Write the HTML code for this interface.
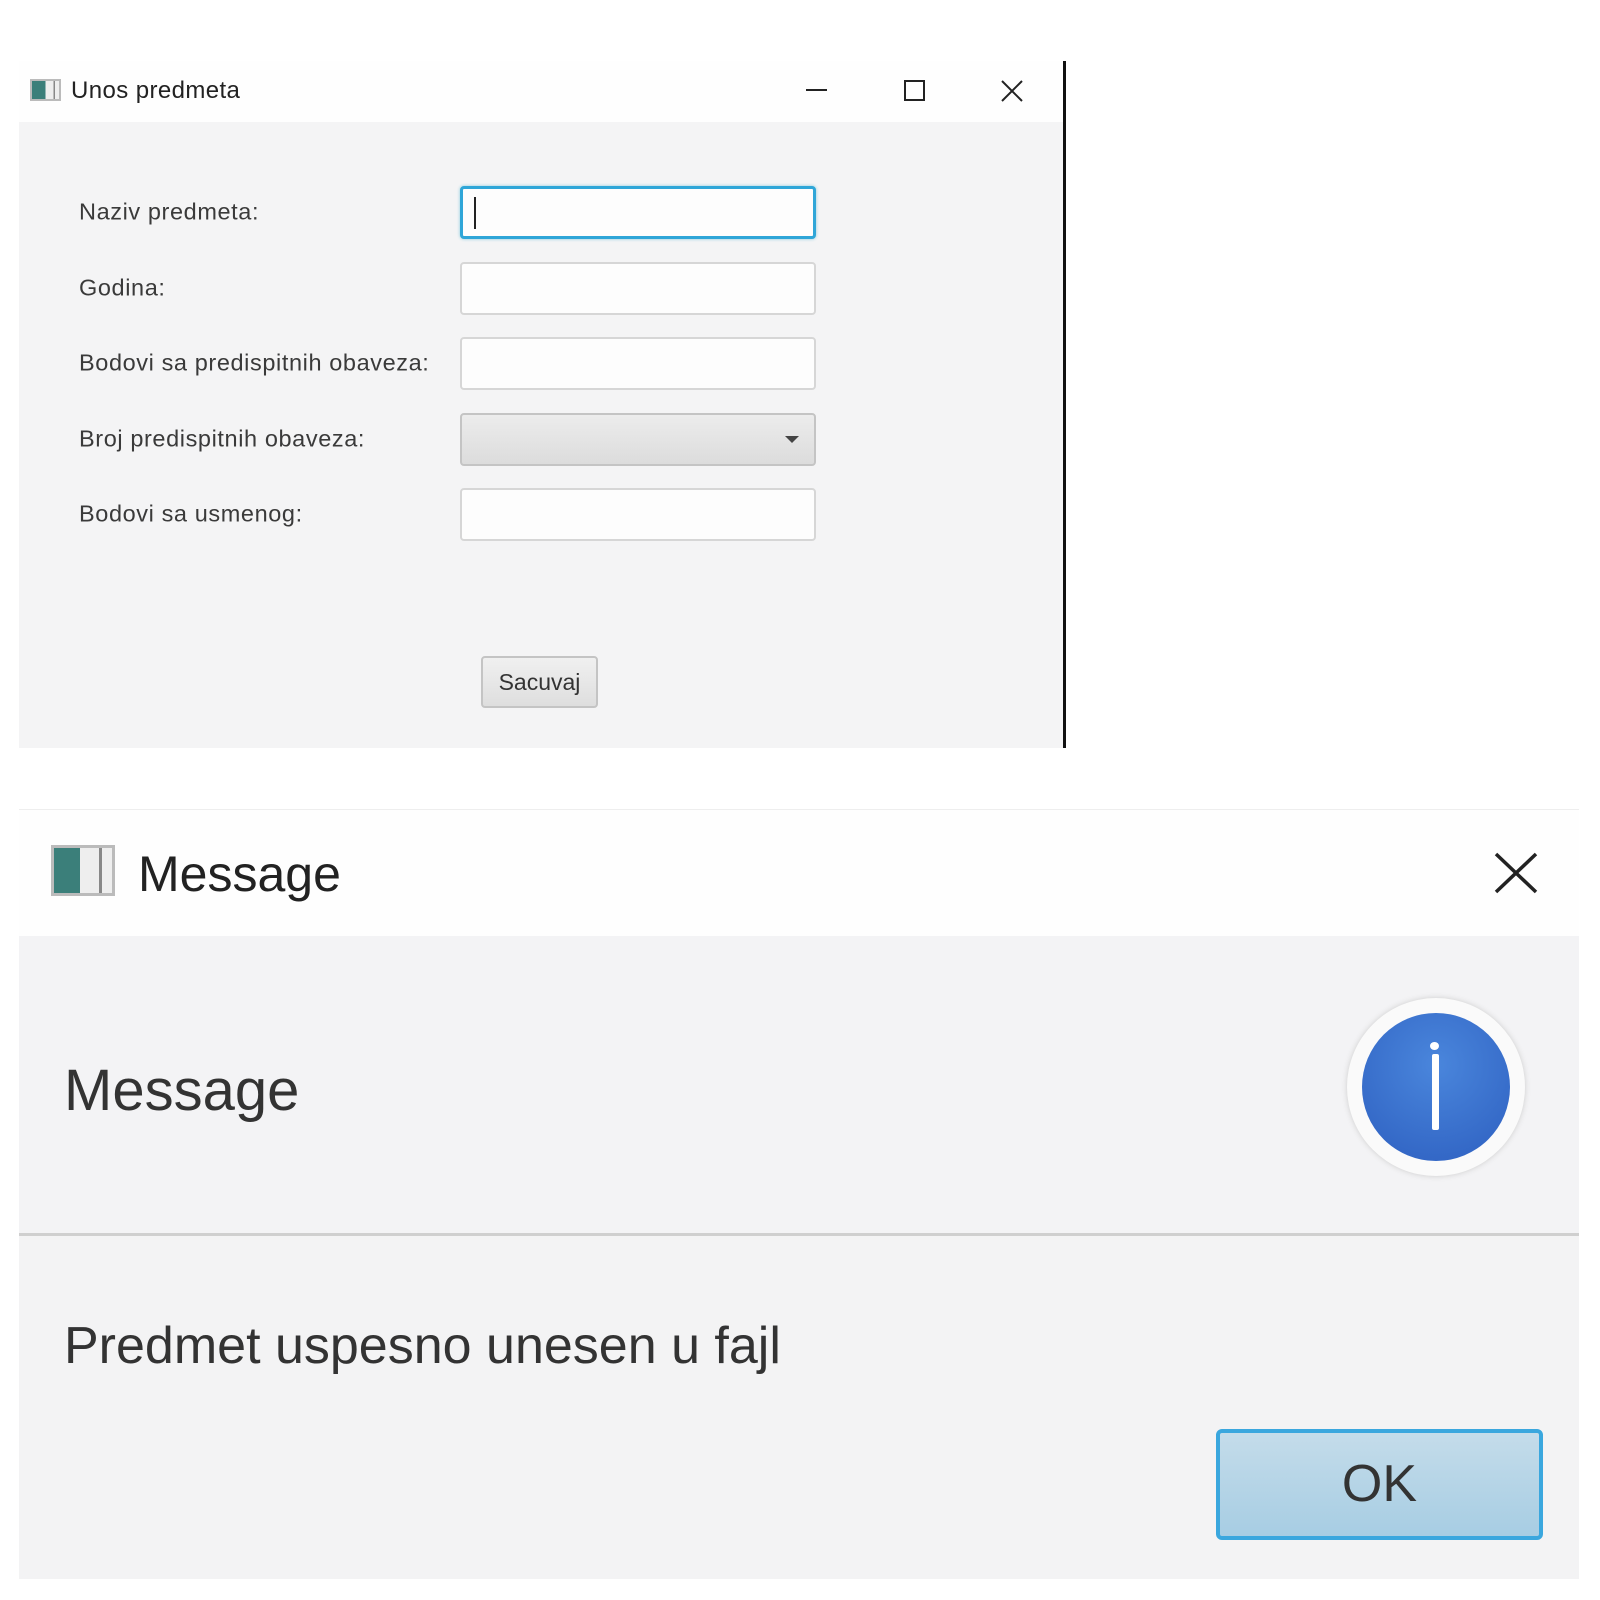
<!DOCTYPE html>
<html><head><style>
*{margin:0;padding:0;box-sizing:border-box}
body{width:1600px;height:1600px;background:#fff;position:relative;overflow:hidden;font-family:"Liberation Sans",sans-serif;color:#333}
.a{position:absolute}
.inp{position:absolute;left:460px;width:356px;height:53px;background:#fdfdfd;border:2px solid #d6d6d6;border-radius:4px}
.lbl{position:absolute;left:79px;font-size:23.5px;letter-spacing:0.6px;color:#3a3a3a;transform:translateY(-50%)}
</style></head><body>
<div class="a" style="left:19px;top:61px;width:1046px;height:61px;background:#fefefe"></div>
<div class="a" style="left:19px;top:122px;width:1046px;height:626px;background:#f4f4f5"></div>
<div class="a" style="left:1063px;top:61px;width:3px;height:687px;background:#111"></div>
<div class="a" style="left:30px;top:79px;width:31px;height:22px;border:2px solid #bbb;background:linear-gradient(90deg,#3b7f7a 0 50%,#eee 50% 80%,#888 80% 85%,#eee 85%)"></div>
<div class="a" style="left:71px;top:77px;font-size:24px;letter-spacing:0.4px;color:#222">Unos predmeta</div>
<div class="a" style="left:806px;top:89px;width:21px;height:2px;background:#222"></div>
<div class="a" style="left:904px;top:80px;width:21px;height:21px;border:2px solid #222"></div>
<svg class="a" style="left:1001px;top:80px" width="22" height="22"><path d="M1 1L21 21M21 1L1 21" stroke="#222" stroke-width="2"/></svg>

<div class="lbl" style="top:212px">Naziv predmeta:</div>
<div class="lbl" style="top:288px">Godina:</div>
<div class="lbl" style="top:363px">Bodovi sa predispitnih obaveza:</div>
<div class="lbl" style="top:439px">Broj predispitnih obaveza:</div>
<div class="lbl" style="top:514px">Bodovi sa usmenog:</div>

<div class="inp" style="top:186px;border:3px solid #2fa6d8;box-shadow:0 0 3px #8cd"></div>
<div class="a" style="left:474px;top:197px;width:2px;height:32px;background:#222"></div>
<div class="inp" style="top:262px"></div>
<div class="inp" style="top:337px"></div>
<div class="inp" style="top:413px;background:linear-gradient(#ececec,#dcdcdc);border-color:#c4c4c4"></div>
<div class="a" style="left:785px;top:436px;width:0;height:0;border-left:7px solid transparent;border-right:7px solid transparent;border-top:7px solid #444"></div>
<div class="inp" style="top:488px"></div>

<div class="a" style="left:481px;top:656px;width:117px;height:52px;border:2px solid #c4c4c4;border-radius:4px;background:linear-gradient(#f0f0f0,#dedede);font-size:23px;color:#333;text-align:center;line-height:48px">Sacuvaj</div>

<div class="a" style="left:19px;top:809px;width:1560px;height:127px;background:#fefefe;border-top:1px solid #eee"></div>
<div class="a" style="left:19px;top:936px;width:1560px;height:298px;background:#f3f3f5"></div>
<div class="a" style="left:19px;top:1233px;width:1560px;height:3px;background:#cfcfcf"></div>
<div class="a" style="left:19px;top:1236px;width:1560px;height:343px;background:#f3f3f4"></div>
<div class="a" style="left:51px;top:845px;width:64px;height:51px;border:3px solid #bbb;background:linear-gradient(90deg,#3b7f7a 0 45%,#eee 45% 78%,#888 78% 83%,#eee 83%)"></div>
<div class="a" style="left:138px;top:845px;font-size:50px;color:#222">Message</div>
<svg class="a" style="left:1494px;top:852px" width="44" height="42"><path d="M2 2L42 40M42 2L2 40" stroke="#222" stroke-width="3.5"/></svg>
<div class="a" style="left:64px;top:1057px;font-size:58px;color:#333">Message</div>
<div class="a" style="left:1347px;top:998px;width:178px;height:178px;border-radius:50%;background:#fafafa;box-shadow:0 0 6px #ccc"></div>
<div class="a" style="left:1362px;top:1013px;width:148px;height:148px;border-radius:50%;background:radial-gradient(circle at 50% 35%,#4a86dc,#2d5fc0)"></div>
<div class="a" style="left:1432px;top:1054px;width:7px;height:76px;background:#fff;border-radius:2px"></div>
<div class="a" style="left:1430px;top:1042px;width:9px;height:8px;background:#fff;border-radius:50%"></div>
<div class="a" style="left:64px;top:1316px;font-size:52px;color:#333">Predmet uspesno unesen u fajl</div>
<div class="a" style="left:1216px;top:1429px;width:327px;height:111px;border:4px solid #3aa7de;border-radius:6px;background:linear-gradient(#c4dcea,#a7cde3);font-size:52px;color:#333;text-align:center;line-height:103px">OK</div>
</body></html>
